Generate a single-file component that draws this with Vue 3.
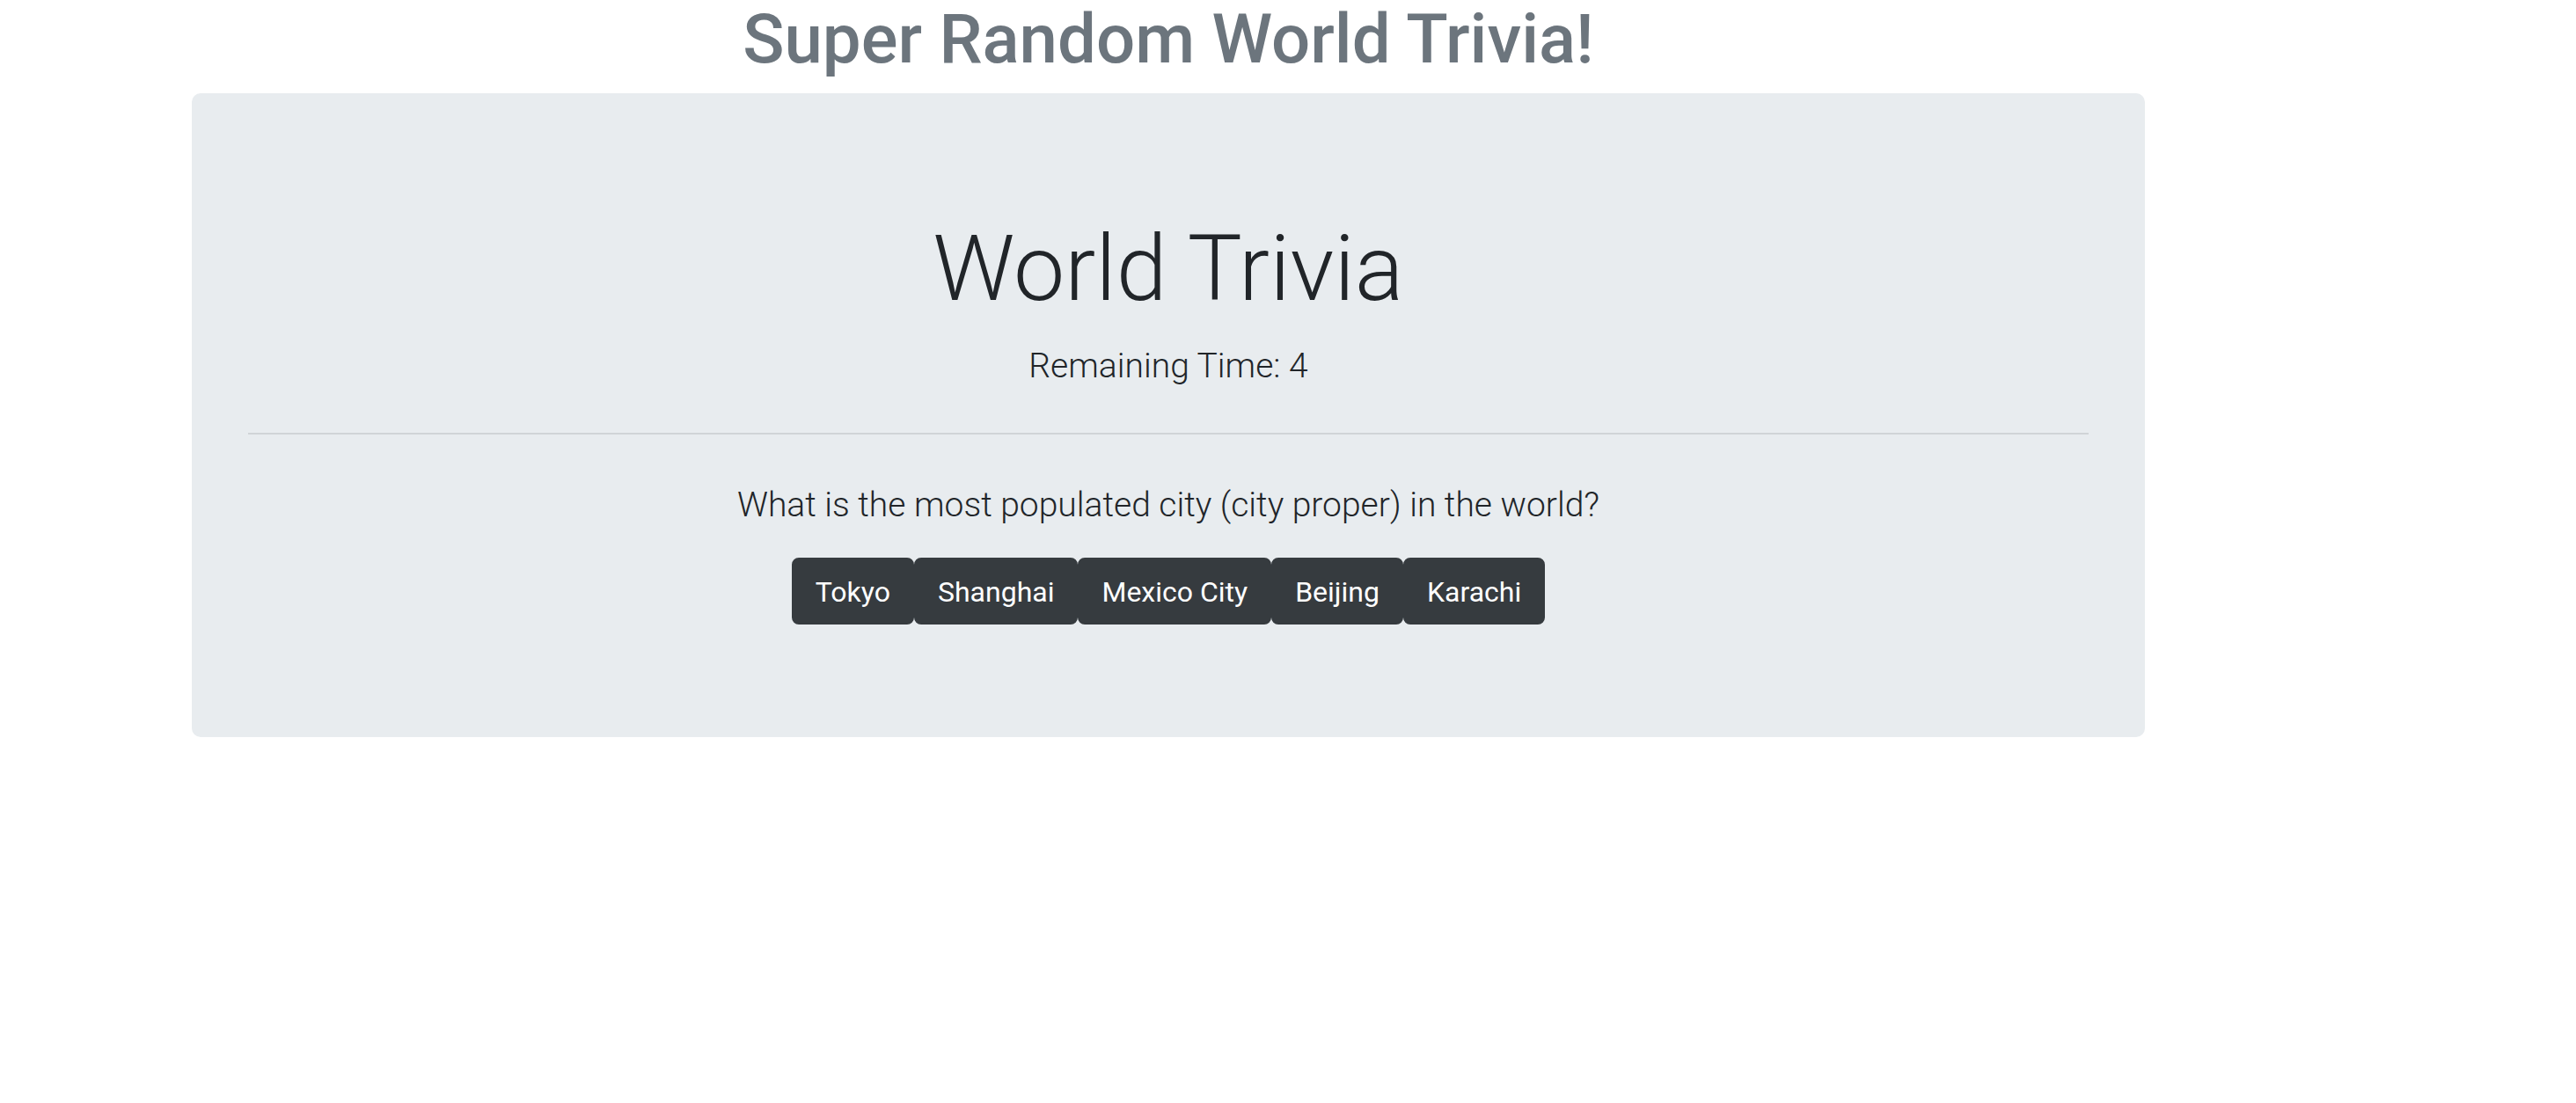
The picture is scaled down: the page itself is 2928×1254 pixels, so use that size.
<script setup>
import { ref } from 'vue'

const remaining = ref(4)
const question = 'What is the most populated city (city proper) in the world?'
const choices = ['Tokyo', 'Shanghai', 'Mexico City', 'Beijing', 'Karachi']
</script>

<template>
  <main class="container">
    <h1 class="title">Super Random World Trivia!</h1>
    <section class="jumbotron">
      <h2 class="display">World Trivia</h2>
      <p class="lead">Remaining Time: {{ remaining }}</p>
      <hr class="rule" />
      <p class="lead">{{ question }}</p>
      <div class="choices">
        <button v-for="choice in choices" :key="choice" type="button" class="choice">{{ choice }}</button>
      </div>
    </section>
  </main>
</template>

<style>
body {
  margin: 0;
  background: #fff;
}
</style>

<style scoped>
.container {
  box-sizing: border-box;
  width: 76%;
  max-width: 2220px;
  margin-left: 218px;
  font-family: Roboto, "Liberation Sans", sans-serif;
  color: #212529;
  text-align: center;
}
.title {
  margin: 0 0 16px;
  font-size: 78px;
  line-height: 90px;
  font-weight: 500;
  color: #6c757d;
}
.jumbotron {
  padding: 128px 64px;
  border-radius: 10px;
  background: #e8ecef;
}
.display {
  margin: 0 0 8px;
  font-size: 104px;
  line-height: 144px;
  font-weight: 350;
}
.lead {
  margin: 0 0 30px;
  font-size: 39px;
  line-height: 60px;
  font-weight: 350;
}
.rule {
  margin: 46px 0 50px;
  border: 0;
  border-top: 2px solid #d0d4d7;
}
.choices {
  display: flex;
  flex-wrap: wrap;
  justify-content: center;
}
.choice {
  padding: 13px 25px 11px;
  border: 2px solid #363b3f;
  border-radius: 8px;
  background: #363b3f;
  color: #fff;
  font: 400 32px/48px Roboto, "Liberation Sans", sans-serif;
}
</style>
